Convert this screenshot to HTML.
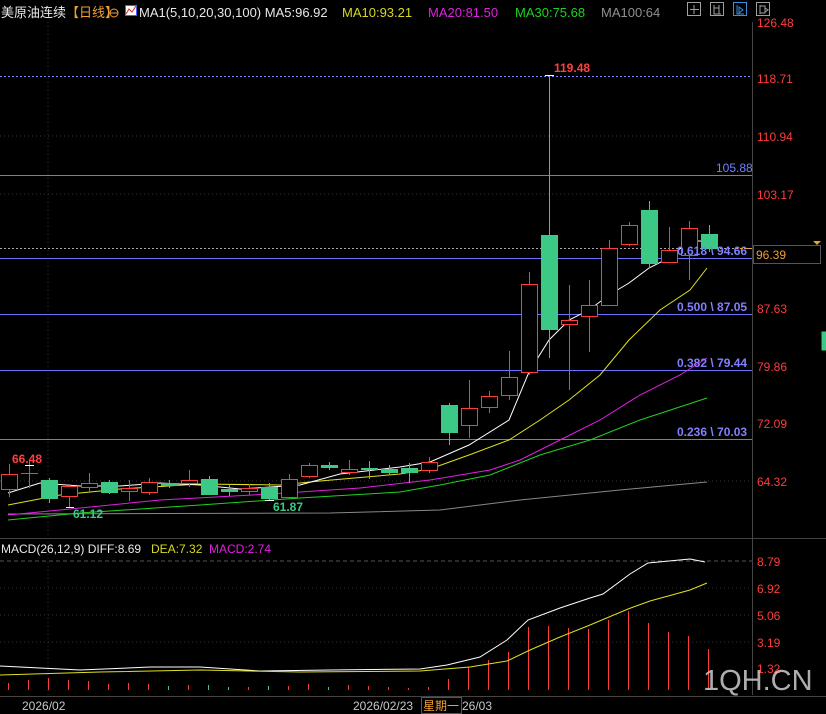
<!DOCTYPE html>
<html><head><meta charset="utf-8"><style>
html,body{margin:0;padding:0;background:#000;width:826px;height:714px;overflow:hidden}
svg{display:block;font-family:"Liberation Sans","Noto Sans CJK SC",sans-serif}
</style></head><body>
<svg width="826" height="714" viewBox="0 0 826 714" xmlns="http://www.w3.org/2000/svg">
<rect width="826" height="714" fill="#000"/>
<text x="1" y="17" font-size="13" fill="#e8e8e8">美原油连续</text>
<text x="66" y="17" font-size="13" fill="#f0a030">【日线】</text>
<circle cx="114" cy="13" r="4" fill="none" stroke="#f0a030"/><line x1="110" y1="13" x2="118" y2="13" stroke="#f0a030"/>
<rect x="125.5" y="5.5" width="11" height="10" fill="#fff" stroke="#4060ff"/><polyline points="126,14 129,9 132,12 136,6" fill="none" stroke="#e02020"/>
<text x="139" y="17" font-size="13" fill="#e8e8e8">MA1(5,10,20,30,100) MA5:96.92</text>
<text x="342" y="17" font-size="13" fill="#d8d820">MA10:93.21</text>
<text x="428" y="17" font-size="13" fill="#e020e0">MA20:81.50</text>
<text x="515" y="17" font-size="13" fill="#20d020">MA30:75.68</text>
<text x="601" y="17" font-size="13" fill="#909090">MA100:64</text>
<g fill="none" stroke="#999">
<rect x="437.5" y="2.5" width="0" height="0" stroke="none"/>
<rect x="437" y="2" width="0" height="0" stroke="none"/>
<rect x="437" y="2" width="0" height="0" stroke="none"/>
</g>
<g fill="none" stroke="#a0a0a0">
<rect x="687.5" y="2.5" width="13" height="13"/>
<rect x="710.5" y="2.5" width="13" height="13"/>
<rect x="733.5" y="2.5" width="13" height="13" stroke="#3a8ee0"/>
<rect x="756.5" y="2.5" width="13" height="13"/>
<path d="M694 5v9M690 9.5h9"/>
<path d="M714 5v9h7M719 5v9M714 8h5"/>
<path d="M737 5v9h7M739 7l4 3-4 3z" stroke="#3a8ee0"/>
<path d="M760 5v9M760 6h5v7h-5M765 8l3 2-3 2"/>
</g>
<!-- grid -->
<g stroke="#333" stroke-dasharray="1,3">
<line x1="48" y1="22" x2="48" y2="695"/>
<line x1="0" y1="194" x2="752" y2="194"/>
<line x1="0" y1="136" x2="752" y2="136"/>
<line x1="0" y1="481" x2="752" y2="481"/>
<line x1="0" y1="588" x2="752" y2="588"/>
<line x1="0" y1="615" x2="752" y2="615"/>
<line x1="0" y1="642" x2="752" y2="642"/>
</g>
<line x1="0" y1="561" x2="752" y2="561" stroke="#555" stroke-dasharray="4,3"/>
<line x1="752.5" y1="22" x2="752.5" y2="695" stroke="#444"/>
<line x1="0" y1="538.5" x2="826" y2="538.5" stroke="#444"/>
<line x1="0" y1="696.5" x2="826" y2="696.5" stroke="#444"/>
<!-- fib lines -->
<g stroke="#7070ff">
<line x1="0" y1="175.5" x2="752" y2="175.5"/>
<line x1="0" y1="258.5" x2="752" y2="258.5"/>
<line x1="0" y1="314.5" x2="752" y2="314.5"/>
<line x1="0" y1="370.5" x2="752" y2="370.5"/>
<line x1="0" y1="439.5" x2="752" y2="439.5"/>
</g>
<line x1="0" y1="76.5" x2="752" y2="76.5" stroke="#8080ff" stroke-dasharray="2,2"/>
<line x1="0" y1="248.5" x2="752" y2="248.5" stroke="#aaa" stroke-dasharray="2,2"/>
<!-- MA lines -->
<g fill="none" stroke-width="1">
<polyline stroke="#888" points="8,514 330,513 440,510 520,500 620,490 707,482"/>
<polyline stroke="#20d020" points="8,520 80,513 200,505 300,498 400,492 440,485 490,475 540,455 590,440 640,420 707,398"/>
<polyline stroke="#e020e0" points="8,515 60,510 160,500 270,494 360,488 430,480 490,470 520,460 560,440 600,420 640,395 680,375 707,358"/>
<polyline stroke="#e0e020" points="8,505 60,495 120,489 200,484 280,485 320,481 400,474 430,469 469,455 509,440 540,420 569,400 600,375 629,340 660,310 690,290 707,268"/>
<polyline stroke="#fff" points="8,493 40,483 80,486 120,486 160,483 200,485 240,489 300,485 340,474 400,467 430,462 469,445 509,420 529,372 549,340 569,320 589,310 609,295 629,283 649,268 669,258 689,241 705,241"/>
</g>
<!-- candles: red hollow -->
<g stroke="#ff3c3c" fill="#000">
<line x1="9.5" y1="464" x2="9.5" y2="497"/><rect x="1.5" y="474.5" width="16" height="15"/>
<line x1="29.5" y1="461" x2="29.5" y2="488"/><line x1="21" y1="473.5" x2="38" y2="473.5"/>
<line x1="69.5" y1="484" x2="69.5" y2="507"/><rect x="61.5" y="486.5" width="16" height="10"/>
<line x1="89.5" y1="473" x2="89.5" y2="493"/><rect x="81.5" y="483.5" width="16" height="4"/>
<line x1="129.5" y1="480" x2="129.5" y2="501"/><rect x="121.5" y="488.5" width="16" height="3"/>
<line x1="149.5" y1="478" x2="149.5" y2="495"/><rect x="141.5" y="482.5" width="16" height="10"/>
<line x1="189.5" y1="470" x2="189.5" y2="487"/><rect x="181.5" y="480.5" width="16" height="3"/>
<line x1="249.5" y1="484" x2="249.5" y2="495"/><rect x="241.5" y="488.5" width="16" height="3"/>
<line x1="289.5" y1="474" x2="289.5" y2="499"/><rect x="281.5" y="479.5" width="16" height="18"/>
<line x1="309.5" y1="463" x2="309.5" y2="478"/><rect x="301.5" y="465.5" width="16" height="11"/>
<line x1="349.5" y1="460" x2="349.5" y2="475"/><rect x="341.5" y="469.5" width="16" height="3"/>
<line x1="429.5" y1="457" x2="429.5" y2="473"/><rect x="421.5" y="462.5" width="16" height="8"/>
<line x1="469.5" y1="380" x2="469.5" y2="438"/><rect x="461.5" y="408.5" width="16" height="17"/>
<line x1="489.5" y1="391" x2="489.5" y2="413"/><rect x="481.5" y="396.5" width="16" height="11"/>
<line x1="509.5" y1="351" x2="509.5" y2="400"/><rect x="501.5" y="377.5" width="16" height="18"/>
<line x1="529.5" y1="272" x2="529.5" y2="375"/><rect x="521.5" y="284.5" width="16" height="88"/>
<line x1="569.5" y1="285" x2="569.5" y2="390"/><rect x="561.5" y="320.5" width="16" height="4"/>
<line x1="589.5" y1="280" x2="589.5" y2="352"/><rect x="581.5" y="305.5" width="16" height="11"/>
<line x1="609.5" y1="240" x2="609.5" y2="306"/><rect x="601.5" y="248.5" width="16" height="57"/>
<line x1="629.5" y1="222" x2="629.5" y2="246"/><rect x="621.5" y="225.5" width="16" height="19"/>
<line x1="669.5" y1="227" x2="669.5" y2="263"/><rect x="661.5" y="250.5" width="16" height="12"/>
<line x1="689.5" y1="221" x2="689.5" y2="280"/><rect x="681.5" y="228.5" width="16" height="27"/>
</g>
<!-- green candles -->
<g stroke="#3cc985" fill="#3cc985">
<line x1="49.5" y1="478" x2="49.5" y2="503"/><rect x="41.5" y="480.5" width="16" height="18"/>
<line x1="109.5" y1="480" x2="109.5" y2="494"/><rect x="101.5" y="482.5" width="16" height="10"/>
<line x1="169.5" y1="480" x2="169.5" y2="488"/><rect x="161.5" y="483.5" width="16" height="2"/>
<line x1="209.5" y1="476" x2="209.5" y2="495"/><rect x="201.5" y="479.5" width="16" height="15"/>
<line x1="229.5" y1="485" x2="229.5" y2="496"/><rect x="221.5" y="489.5" width="16" height="2"/>
<line x1="269.5" y1="483" x2="269.5" y2="500"/><rect x="261.5" y="487.5" width="16" height="11"/>
<line x1="329.5" y1="462" x2="329.5" y2="470"/><rect x="321.5" y="465.5" width="16" height="2"/>
<line x1="369.5" y1="461" x2="369.5" y2="479"/><rect x="361.5" y="468.5" width="16" height="1"/>
<line x1="389.5" y1="465" x2="389.5" y2="475"/><rect x="381.5" y="469.5" width="16" height="3"/>
<line x1="409.5" y1="463" x2="409.5" y2="483"/><rect x="401.5" y="468.5" width="16" height="4"/>
<line x1="449.5" y1="403" x2="449.5" y2="445"/><rect x="441.5" y="405.5" width="16" height="27"/>
<line x1="549.5" y1="75" x2="549.5" y2="358"/><rect x="541.5" y="235.5" width="16" height="94"/>
<line x1="649.5" y1="201" x2="649.5" y2="268"/><rect x="641.5" y="210.5" width="16" height="53"/>
<line x1="709.5" y1="225" x2="709.5" y2="252"/><rect x="701.5" y="234.5" width="16" height="14"/>
<rect x="822" y="332" width="4" height="18"/>
</g>
<g stroke="#fff"><line x1="545" y1="75.5" x2="554" y2="75.5"/><line x1="25" y1="465.5" x2="34" y2="465.5"/><line x1="66" y1="507.5" x2="74" y2="507.5"/><line x1="265" y1="500.5" x2="274" y2="500.5"/></g>
<!-- labels in chart -->
<g font-size="12" font-weight="bold">
<text x="554" y="72" fill="#ff4040">119.48</text>
<text x="12" y="463" fill="#ff4040">66.48</text>
<text x="73" y="518" fill="#3cc985">61.12</text>
<text x="273" y="511" fill="#3cc985">61.87</text>
<text x="677" y="255" fill="#8080ff">0.618 \ 94.66</text>
<text x="677" y="311" fill="#8080ff">0.500 \ 87.05</text>
<text x="677" y="367" fill="#8080ff">0.382 \ 79.44</text>
<text x="677" y="436" fill="#8080ff">0.236 \ 70.03</text>
</g>
<text x="716" y="172" font-size="12" fill="#7080ff">105.88</text>
<!-- right axis -->
<g font-size="12" fill="#ff3c3c">
<text x="757" y="27">126.48</text>
<text x="757" y="83">118.71</text>
<text x="757" y="141">110.94</text>
<text x="757" y="199">103.17</text>
<text x="757" y="313">87.63</text>
<text x="757" y="371">79.86</text>
<text x="757" y="428">72.09</text>
<text x="757" y="486">64.32</text>
<text x="757" y="566">8.79</text>
<text x="757" y="593">6.92</text>
<text x="757" y="620">5.06</text>
<text x="757" y="647">3.19</text>
<text x="757" y="673">1.32</text>
</g>
<line x1="740" y1="248.5" x2="752" y2="248.5" stroke="#f0a030" stroke-dasharray="3,2"/>
<rect x="753.5" y="245.5" width="67" height="18" fill="#000" stroke="#555"/>
<text x="756" y="259" font-size="12" fill="#f0a030">96.39</text>
<path d="M813 241h8l-4 4z" fill="#f0a030"/>
<!-- MACD -->
<text x="1" y="553" font-size="12" fill="#e8e8e8">MACD(26,12,9) DIFF:8.69</text>
<text x="151" y="553" font-size="12" fill="#d8d820">DEA:7.32</text>
<text x="209" y="553" font-size="12" fill="#e020e0">MACD:2.74</text>
<g stroke="#ff3c3c">
<line x1="8.5" y1="690" x2="8.5" y2="683"/><line x1="28.5" y1="690" x2="28.5" y2="680"/><line x1="48.5" y1="690" x2="48.5" y2="678"/><line x1="68.5" y1="690" x2="68.5" y2="680"/><line x1="88.5" y1="690" x2="88.5" y2="681"/><line x1="108.5" y1="690" x2="108.5" y2="684"/><line x1="128.5" y1="690" x2="128.5" y2="683"/><line x1="148.5" y1="690" x2="148.5" y2="684"/><line x1="188.5" y1="690" x2="188.5" y2="685"/><line x1="248.5" y1="690" x2="248.5" y2="687"/><line x1="288.5" y1="690" x2="288.5" y2="686"/><line x1="308.5" y1="690" x2="308.5" y2="684"/><line x1="348.5" y1="690" x2="348.5" y2="685"/><line x1="368.5" y1="690" x2="368.5" y2="686"/><line x1="388.5" y1="690" x2="388.5" y2="687"/><line x1="408.5" y1="690" x2="408.5" y2="688"/>
<line x1="428.5" y1="690" x2="428.5" y2="687"/><line x1="448.5" y1="690" x2="448.5" y2="679"/><line x1="468.5" y1="690" x2="468.5" y2="667"/><line x1="488.5" y1="690" x2="488.5" y2="660"/><line x1="508.5" y1="690" x2="508.5" y2="652"/><line x1="528.5" y1="690" x2="528.5" y2="627"/><line x1="548.5" y1="690" x2="548.5" y2="626"/><line x1="568.5" y1="690" x2="568.5" y2="628"/><line x1="588.5" y1="690" x2="588.5" y2="629"/><line x1="608.5" y1="690" x2="608.5" y2="620"/><line x1="628.5" y1="690" x2="628.5" y2="611"/><line x1="648.5" y1="690" x2="648.5" y2="623"/><line x1="668.5" y1="690" x2="668.5" y2="632"/><line x1="688.5" y1="690" x2="688.5" y2="636"/><line x1="708.5" y1="690" x2="708.5" y2="649"/>
</g>
<g stroke="#3cc985"><line x1="168.5" y1="690" x2="168.5" y2="686"/><line x1="208.5" y1="690" x2="208.5" y2="685"/><line x1="228.5" y1="690" x2="228.5" y2="687"/><line x1="268.5" y1="690" x2="268.5" y2="686"/><line x1="328.5" y1="690" x2="328.5" y2="687"/></g>
<polyline fill="none" stroke="#fff" points="0,666 40,668 80,670 150,667 200,667 260,671 330,670 420,669 447,665 480,657 507,640 528,620 560,608 590,598 603,594 630,574 648,563 690,559 705,562"/>
<polyline fill="none" stroke="#e0e020" points="0,675 100,672 200,670 300,672 420,671 470,667 507,661 530,650 560,637 590,625 628,609 650,601 690,590 707,583"/>
<text x="703" y="690" font-size="29" fill="#ccc" fill-opacity="0.85">1QH.CN</text>
<!-- date bar -->
<text x="22" y="710" font-size="12" fill="#c8c8c8">2026/02</text>
<text x="353" y="710" font-size="12" fill="#c8c8c8">2026/02/23</text>
<rect x="421.5" y="697.5" width="40" height="16" fill="#000" stroke="#555"/>
<text x="423" y="710" font-size="12" fill="#f0a030">星期一</text>
<text x="462" y="710" font-size="12" fill="#c8c8c8">26/03</text>
</svg>
</body></html>
